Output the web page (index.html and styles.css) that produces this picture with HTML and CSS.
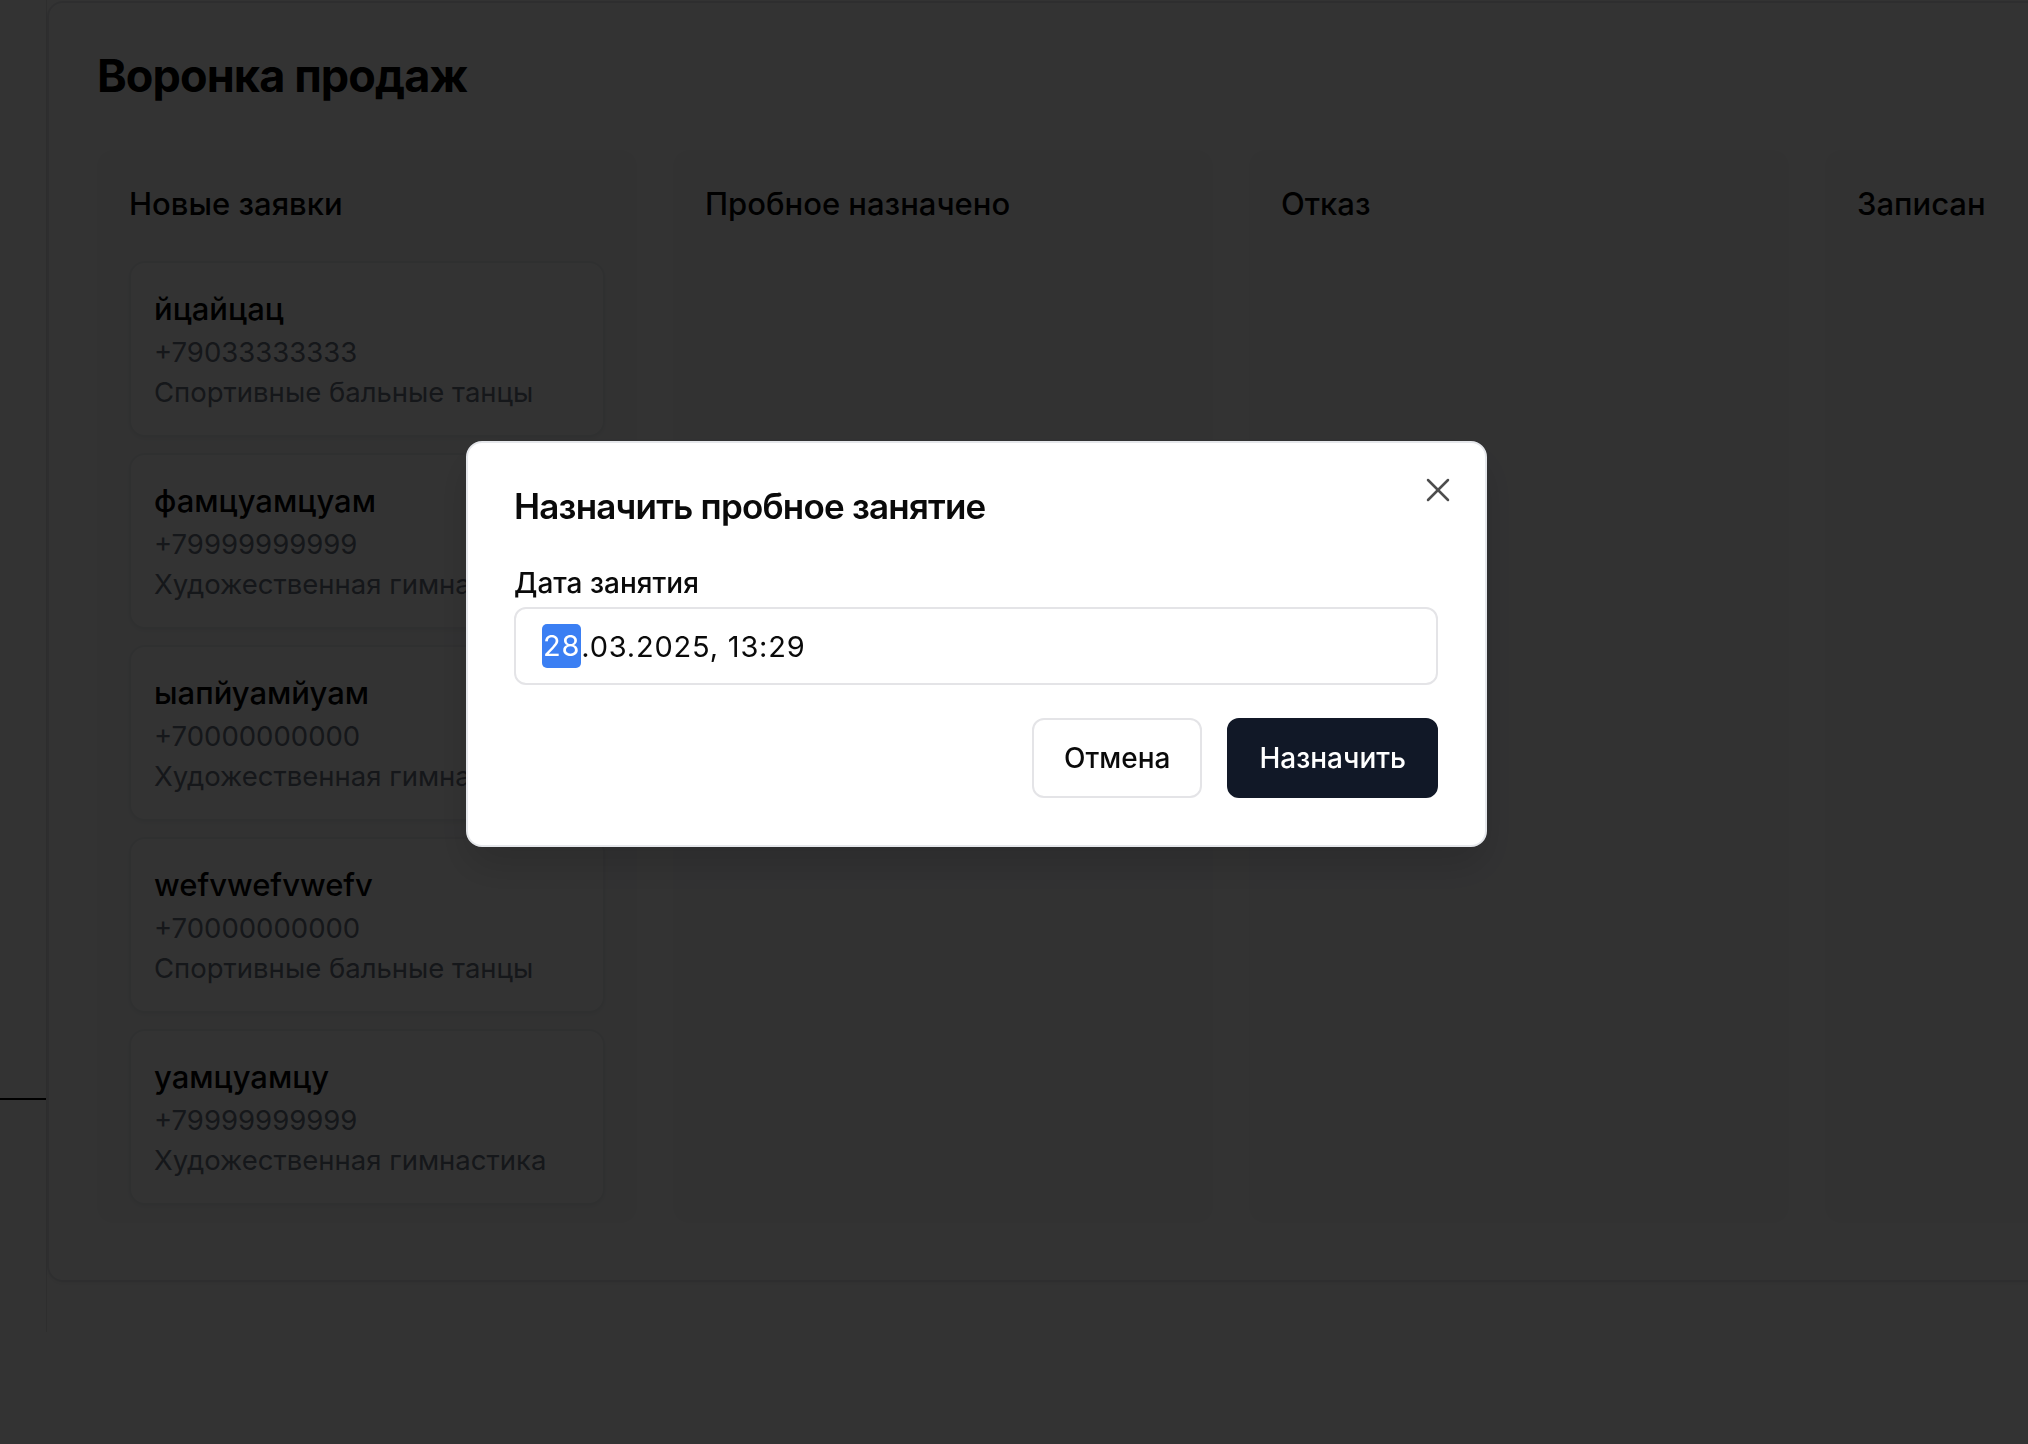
FILE: index.html
```html
<!DOCTYPE html>
<html lang="ru">
<head>
<meta charset="utf-8">
<title>Воронка продаж</title>
<link rel="stylesheet" href="styles.css">
</head>
<body>
<div class="app">
  <aside class="sidebar">
    <div class="sidebar-space"></div>
    <div class="sidebar-divider"></div>
  </aside>
  <main class="main">
    <section class="board-card">
      <h1 class="page-title">Воронка продаж</h1>
      <div class="board">
        <div class="column">
          <h2 class="column-title">Новые заявки</h2>
          <div class="lead">
            <div class="lead-name">йцайцац</div>
            <div class="lead-meta">+79033333333</div>
            <div class="lead-meta">Спортивные бальные танцы</div>
          </div>
          <div class="lead">
            <div class="lead-name">фамцуамцуам</div>
            <div class="lead-meta">+79999999999</div>
            <div class="lead-meta">Художественная гимнастика</div>
          </div>
          <div class="lead">
            <div class="lead-name">ыапйуамйуам</div>
            <div class="lead-meta">+70000000000</div>
            <div class="lead-meta">Художественная гимнастика</div>
          </div>
          <div class="lead">
            <div class="lead-name">wefvwefvwefv</div>
            <div class="lead-meta">+70000000000</div>
            <div class="lead-meta">Спортивные бальные танцы</div>
          </div>
          <div class="lead">
            <div class="lead-name">уамцуамцу</div>
            <div class="lead-meta">+79999999999</div>
            <div class="lead-meta">Художественная гимнастика</div>
          </div>
        </div>
        <div class="column">
          <h2 class="column-title">Пробное назначено</h2>
        </div>
        <div class="column">
          <h2 class="column-title">Отказ</h2>
        </div>
        <div class="column">
          <h2 class="column-title">Записан</h2>
        </div>
      </div>
    </section>
  </main>
</div>

<div class="overlay"></div>

<div class="dialog" role="dialog">
  <button class="dialog-close" type="button" aria-label="Закрыть">
    <svg viewBox="0 0 24 24" width="40" height="40" fill="none" stroke="currentColor" stroke-width="1.5" stroke-linecap="round" stroke-linejoin="round"><path d="M18 6 6 18"/><path d="m6 6 12 12"/></svg>
  </button>
  <h3 class="dialog-title">Назначить пробное занятие</h3>
  <label class="field-label">Дата занятия</label>
  <div class="date-input"><span class="seg-selected">28</span><span class="seg-rest">.03.2025, 13:29</span></div>
  <div class="dialog-actions">
    <button class="btn btn-outline" type="button">Отмена</button>
    <button class="btn btn-primary" type="button">Назначить</button>
  </div>
</div>
</body>
</html>
```

FILE: styles.css
```css
* {
  box-sizing: border-box;
}

html, body {
  margin: 0;
  padding: 0;
}

body {
  width: 2028px;
  height: 1444px;
  overflow: hidden;
  background: #ffffff;
  font-family: Inter, "Noto Sans", "Liberation Sans", sans-serif;
  color: #0a0a0a;
}

.app {
  display: flex;
  align-items: flex-start;
}

.sidebar {
  flex: 0 0 47px;
  height: 1332px;
  border-right: 1px solid #e4e4e7;
  display: flex;
  flex-direction: column;
}

.sidebar-space {
  flex: 0 0 1098px;
}

.sidebar-divider {
  height: 2px;
  background: #000;
}

.main {
  flex: 1;
  padding-top: 1px;
}

.board-card {
  width: 2440px;
  border: 2px solid #e5e7eb;
  border-radius: 16px;
  padding: 46px 48px 57px 48px;
  background: #fff;
  box-shadow: 0 2px 4px rgba(0, 0, 0, 0.05);
}

.page-title {
  margin: 0 0 47px 0;
  font-size: 45px;
  line-height: 54px;
  font-weight: 700;
  letter-spacing: -0.9px;
  color: #000;
}

.board {
  display: flex;
  gap: 36px;
  align-items: stretch;
}

.column {
  flex: 0 0 540px;
  background: #f9fafb;
  border-radius: 16px;
  padding: 34px 32px 18px 32px;
  display: flex;
  flex-direction: column;
  gap: 16px;
}

.column-title {
  margin: 0 0 21px 0;
  font-size: 31px;
  line-height: 40px;
  font-weight: 500;
  color: #000;
}

.lead {
  background: #fff;
  border: 2px solid #eceef1;
  border-radius: 16px;
  padding: 23px 23px;
  box-shadow: 0 2px 4px rgba(0, 0, 0, 0.05);
}

.lead-name {
  font-size: 31px;
  line-height: 46px;
  font-weight: 500;
  color: #000;
}

.lead-meta {
  font-size: 27.5px;
  line-height: 40px;
  color: #6b7280;
}

.overlay {
  position: fixed;
  inset: 0;
  background: rgba(0, 0, 0, 0.8);
}

.dialog {
  position: fixed;
  left: 466px;
  top: 441px;
  width: 1021px;
  background: #fff;
  border: 2px solid #e5e7eb;
  border-radius: 16px;
  padding: 46px 47px 47px 46px;
  box-shadow: 0 20px 40px rgba(0, 0, 0, 0.15);
  display: flex;
  flex-direction: column;
}

.dialog-close {
  position: absolute;
  top: 27px;
  right: 27px;
  width: 40px;
  height: 40px;
  padding: 0;
  border: 0;
  background: transparent;
  color: #4d4d4d;
  display: flex;
}

.dialog-title {
  margin: 0;
  font-size: 35px;
  line-height: 35px;
  font-weight: 600;
  letter-spacing: -0.8px;
  color: #0a0a0a;
}

.field-label {
  margin-top: 39px;
  font-size: 28px;
  line-height: 40px;
  font-weight: 500;
  color: #0a0a0a;
}

.date-input {
  margin-top: 4px;
  height: 78px;
  border: 2px solid #e4e4e7;
  border-radius: 12px;
  padding: 0 26px;
  display: flex;
  align-items: center;
  font-size: 29px;
  letter-spacing: 0.8px;
  color: #0a0a0a;
}

.seg-selected {
  background: #3b7ff3;
  color: #fff;
  border-radius: 5px;
  height: 44px;
  line-height: 44px;
  padding: 0 1px;
}

.dialog-actions {
  margin-top: 33px;
  display: flex;
  justify-content: flex-end;
  gap: 25px;
}

.btn {
  height: 80px;
  padding: 0 30px;
  border-radius: 12px;
  font-family: Inter, "Noto Sans", "Liberation Sans", sans-serif;
  font-size: 28px;
  font-weight: 500;
  cursor: pointer;
}

.btn-outline {
  background: #fff;
  border: 2px solid #e4e4e7;
  color: #0a0a0a;
}

.btn-primary {
  background: #111827;
  border: 2px solid #111827;
  color: #fff;
}
```
